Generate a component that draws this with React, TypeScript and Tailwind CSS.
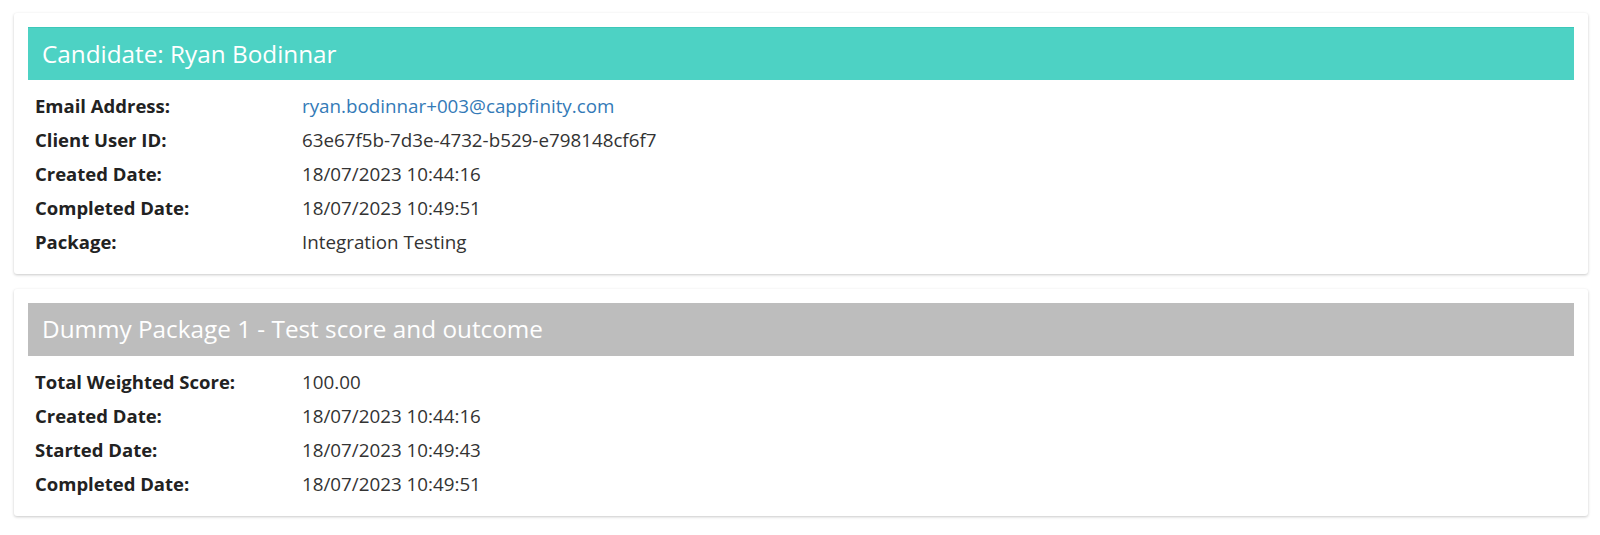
import React from 'react';

type Row = { label: string; value: string; link?: boolean };

const candidateRows: Row[] = [
  { label: 'Email Address:', value: 'ryan.bodinnar+003@cappfinity.com', link: true },
  { label: 'Client User ID:', value: '63e67f5b-7d3e-4732-b529-e798148cf6f7' },
  { label: 'Created Date:', value: '18/07/2023 10:44:16' },
  { label: 'Completed Date:', value: '18/07/2023 10:49:51' },
  { label: 'Package:', value: 'Integration Testing' },
];

const packageRows: Row[] = [
  { label: 'Total Weighted Score:', value: '100.00' },
  { label: 'Created Date:', value: '18/07/2023 10:44:16' },
  { label: 'Started Date:', value: '18/07/2023 10:49:43' },
  { label: 'Completed Date:', value: '18/07/2023 10:49:51' },
];

const Panel = ({ title, headerClass, rows }: { title: string; headerClass: string; rows: Row[] }) => (
  <div className="bg-white rounded-[3px] shadow-[0_1px_3px_rgba(0,0,0,0.22)] px-[14px] pt-[14px] pb-[15px]">
    <div className={`h-[53px] flex items-center px-[14px] text-white text-[24.3px] ${headerClass}`}>{title}</div>
    <div className="mt-[9px]">
      {rows.map((row) => (
        <div key={row.label} className="flex items-center h-[34px]">
          <div className="w-[274px] pl-[7px] font-bold text-[18.5px] text-[#222]">{row.label}</div>
          {row.link ? (
            <a href="#" className="text-[18.8px] text-[#337ab7]">{row.value}</a>
          ) : (
            <div className="text-[18.8px] text-[#333]">{row.value}</div>
          )}
        </div>
      ))}
    </div>
  </div>
);

export default function App() {
  return (
    <div className="bg-white min-h-[535px] pt-[13px] pl-[14px] pr-[12px] flex flex-col gap-[15px] font-['Open_Sans',sans-serif]">
      <Panel title="Candidate: Ryan Bodinnar" headerClass="bg-[#4dd2c4] border-t border-[#3cc8b9]" rows={candidateRows} />
      <Panel title="Dummy Package 1 - Test score and outcome" headerClass="bg-[#bdbdbd]" rows={packageRows} />
    </div>
  );
}
